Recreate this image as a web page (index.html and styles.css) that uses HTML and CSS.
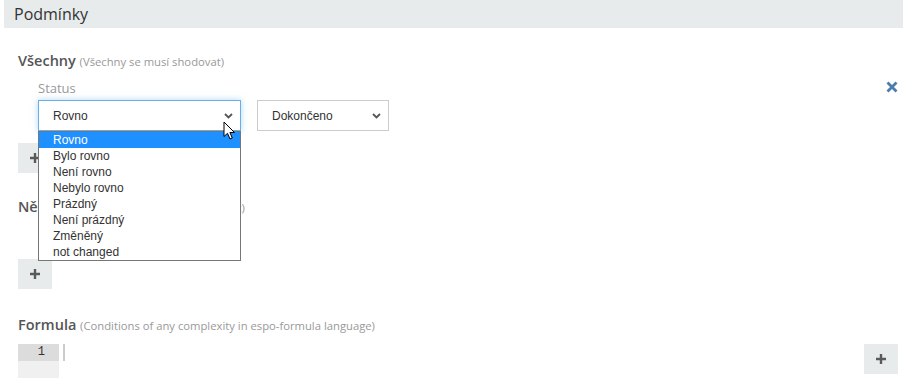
FILE: index.html
```html
<!DOCTYPE html>
<html lang="cs">
<head>
<meta charset="utf-8">
<title>Podmínky</title>
<link rel="stylesheet" href="styles.css">
</head>
<body>
<div class="panel-heading">Podmínky</div>
<div class="panel-body">
  <div class="group">
    <h4 class="group-title">Všechny <small>(Všechny se musí shodovat)</small></h4>
    <div class="item">
      <div class="item-main">
        <div class="field-label">Status</div>
        <div class="field-row">
          <div class="select-wrap">
            <div class="select select-focus select-wide">
              <span>Rovno</span>
              <svg class="chev" width="9" height="6" viewBox="0 0 9 6"><path d="M1 1 L4.5 4.5 L8 1" fill="none" stroke="#555" stroke-width="1.8"/></svg>
            </div>
            <ul class="dropdown">
              <li class="active">Rovno</li>
              <li>Bylo rovno</li>
              <li>Není rovno</li>
              <li>Nebylo rovno</li>
              <li>Prázdný</li>
              <li>Není prázdný</li>
              <li>Změněný</li>
              <li>not changed</li>
            </ul>
            <svg class="pointer" width="13" height="19" viewBox="0 0 13 19"><path d="M1 1 L1 15.5 L4.5 12.3 L7 18 L9.3 17 L6.9 11.5 L11.5 11.5 Z" fill="#fff" stroke="#000" stroke-width="1" stroke-linejoin="round"/></svg>
          </div>
          <div class="select select-narrow">
            <span>Dokončeno</span>
            <svg class="chev" width="9" height="6" viewBox="0 0 9 6"><path d="M1 1 L4.5 4.5 L8 1" fill="none" stroke="#555" stroke-width="1.8"/></svg>
          </div>
        </div>
      </div>
      <svg class="remove" width="12" height="12" viewBox="0 0 12 12"><path d="M1.5 1.5 L10.5 10.5 M10.5 1.5 L1.5 10.5" stroke="#4a7cac" stroke-width="2.8"/></svg>
    </div>
    <div class="btn-add"><svg width="10" height="10" viewBox="0 0 10 10"><path d="M5 0 V10 M0 5 H10" stroke="#5a5a5a" stroke-width="2.4"/></svg></div>
  </div>

  <div class="group group-any">
    <h4 class="group-title">Některé <small>(Aspoň jedna se musí shodovat)</small></h4>
    <div class="btn-add btn-any"><svg width="10" height="10" viewBox="0 0 10 10"><path d="M5 0 V10 M0 5 H10" stroke="#5a5a5a" stroke-width="2.4"/></svg></div>
  </div>

  <div class="group group-formula">
    <h4 class="group-title">Formula <small>(Conditions of any complexity in espo-formula language)</small></h4>
    <div class="editor-row">
      <div class="editor">
        <div class="gutter">
          <div class="line-no">1</div>
        </div>
        <div class="code"><span class="caret"></span></div>
      </div>
      <div class="btn-add"><svg width="10" height="10" viewBox="0 0 10 10"><path d="M5 0 V10 M0 5 H10" stroke="#5a5a5a" stroke-width="2.4"/></svg></div>
    </div>
  </div>
</div>
</body>
</html>
```

FILE: styles.css
```css
* { box-sizing: border-box; }
html, body { margin: 0; padding: 0; background: #fff; }
body {
  font-family: "Open Sans", "Liberation Sans", sans-serif;
  color: #333;
  overflow: hidden;
  height: 378px;
}
.panel-heading {
  margin-left: 4px;
  height: 28px;
  line-height: 28px;
  padding: 0 10px;
  background: #e8ebec;
  font-size: 16px;
  color: #333;
}
.panel-body {
  padding: 0 5px 0 18px;
}
.group-title {
  margin: 0;
  font-size: 14.5px;
  font-weight: 600;
  line-height: 20px;
  height: 20px;
  color: #555;
}
.group-title small {
  font-size: 11.25px;
  font-weight: 400;
  color: #999;
}
.group { padding-top: 23px; }
.item {
  display: flex;
  justify-content: space-between;
  align-items: flex-start;
  padding-left: 20px;
  margin-top: 8px;
}
.field-label {
  font-size: 13px;
  line-height: 18px;
  height: 18px;
  color: #999;
}
.field-row {
  display: flex;
  gap: 16px;
  margin-top: 3px;
}
.select-wrap { position: relative; }
.select {
  height: 31px;
  border: 1px solid #ccc;
  background: #fff;
  display: flex;
  align-items: center;
  justify-content: space-between;
  padding: 0 7px 0 14px;
  font-family: "Liberation Sans", Arial, sans-serif;
  font-size: 12px;
  color: #333;
}
.select-wide { width: 203px; }
.select-narrow { width: 132px; }
.select-focus {
  border-color: #66afe9;
  box-shadow: 0 0 6px rgba(102, 175, 233, 0.5);
}
.chev { display: block; }
.dropdown {
  position: absolute;
  left: 0;
  top: 100%;
  width: 203px;
  margin: 0;
  padding: 0;
  list-style: none;
  background: #fff;
  border: 1px solid #767676;
  z-index: 5;
}
.dropdown li {
  height: 16px;
  line-height: 16px;
  padding-left: 14px;
  font-family: "Liberation Sans", Arial, sans-serif;
  font-size: 12px;
  color: #333;
}
.dropdown li.active {
  background: #1e90ff;
  color: #fff;
}
.pointer {
  position: absolute;
  left: 185px;
  top: 21px;
  z-index: 6;
}
.remove {
  display: block;
  margin-top: 2px;
}
.btn-add {
  width: 34px;
  height: 30px;
  background: #e8ebec;
  display: flex;
  align-items: center;
  justify-content: center;
  margin-top: 12px;
}
.group-any { padding-top: 24px; }
.btn-any { margin-top: 42px; }
.group-formula { padding-top: 26px; }
.editor-row {
  display: flex;
  justify-content: space-between;
  margin-top: 9px;
}
.editor-row .btn-add { margin-top: 0; }
.editor {
  display: flex;
  height: 40px;
}
.gutter {
  width: 41px;
  background: #f0f0f0;
}
.line-no {
  height: 17px;
  line-height: 17px;
  background: #dcdcdc;
  text-align: right;
  padding-right: 14px;
  font-family: "Liberation Mono", monospace;
  font-size: 12px;
  color: #333;
}
.code { padding-left: 4px; }
.caret {
  display: block;
  width: 2px;
  height: 17px;
  background: #ccc;
}
```
